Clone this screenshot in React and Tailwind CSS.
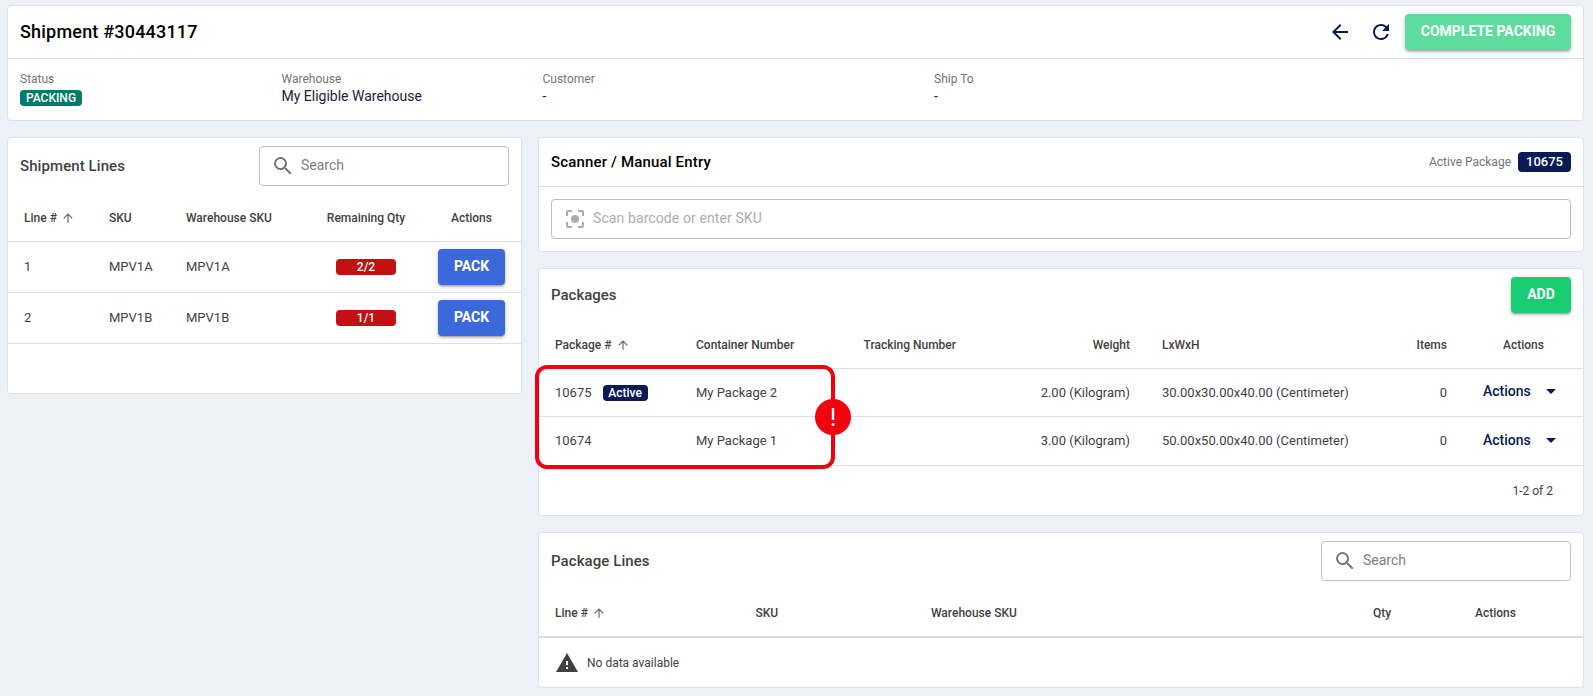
import React from "react";
import {
  MdArrowBack,
  MdArrowDropDown,
  MdArrowUpward,
  MdRefresh,
  MdSearch,
  MdWarning,
} from "react-icons/md";

const shipmentLines = [
  { line: 1, sku: "MPV1A", warehouseSku: "MPV1A", remaining: "2/2" },
  { line: 2, sku: "MPV1B", warehouseSku: "MPV1B", remaining: "1/1" },
];

const packages = [
  {
    id: 10675,
    active: true,
    container: "My Package 2",
    weight: "2.00 (Kilogram)",
    size: "30.00x30.00x40.00 (Centimeter)",
    items: 0,
  },
  {
    id: 10674,
    active: false,
    container: "My Package 1",
    weight: "3.00 (Kilogram)",
    size: "50.00x50.00x40.00 (Centimeter)",
    items: 0,
  },
];

const buttonShadow =
  "shadow-[0_1px_5px_rgba(0,0,0,0.2),0_2px_2px_rgba(0,0,0,0.14),0_3px_1px_-2px_rgba(0,0,0,0.12)]";

const Card = ({ className = "", children }) => (
  <div className={`rounded border border-[#d9e2ef] bg-white ${className}`}>
    {children}
  </div>
);

const Button = ({ className = "", children }) => (
  <button
    className={`h-9 rounded pb-0.5 text-sm font-bold whitespace-nowrap text-white ${buttonShadow} ${className}`}
  >
    {children}
  </button>
);

const SearchBox = () => (
  <div className="flex h-10 w-[250px] items-center rounded border border-[#c2c2c2] px-[11px]">
    <MdSearch className="h-6 w-6 text-[#757575]" />
    <input
      className="ml-1.5 w-40 pb-0.5 text-sm outline-none placeholder:text-[#808080]"
      placeholder="Search"
    />
  </div>
);

const SortHeader = ({ label }) => (
  <span className="flex items-center">
    {label}
    <MdArrowUpward className="ml-1 h-[14px] w-[14px] text-[#666]" />
  </span>
);

const Field = ({ label, children }) => (
  <div>
    <p className="text-xs leading-[18px] text-[#757575]">{label}</p>
    <div className="text-sm leading-4 text-[#1d2238]">{children}</div>
  </div>
);

const ShipmentHeader = () => (
  <Card className="h-[116px]">
    <div className="flex h-[53px] items-center border-b border-[#dedede] px-3">
      <h1 className="flex-1 text-lg font-medium tracking-[0.2px] text-black">
        Shipment #30443117
      </h1>
      <MdArrowBack className="h-6 w-6 text-[#081b54]" />
      <MdRefresh className="mr-3 ml-[17px] h-6 w-6 text-[#081b54]" />
      <Button className="w-[166px] bg-[#5edc9f]">COMPLETE PACKING</Button>
    </div>
    <div className="grid grid-cols-[261.5px_261px_391.5px_1fr] px-3 pt-[11px]">
      <Field label="Status">
        <span className="mt-0.5 block h-4 w-[62px] rounded bg-[#047a69] text-center text-xs leading-4 font-medium text-white">
          PACKING
        </span>
      </Field>
      <Field label="Warehouse">My Eligible Warehouse</Field>
      <Field label="Customer">-</Field>
      <Field label="Ship To">-</Field>
    </div>
  </Card>
);

const lineCols =
  "grid grid-cols-[85px_77px_125px_110px_1fr] items-center border-b border-[#dedede] pl-4";

const ShipmentLines = () => (
  <Card className="h-[257px] w-[515px]">
    <div className="flex h-[55px] items-center justify-between px-3">
      <h2 className="pt-px text-[15px] font-medium tracking-[0.08px]">
        Shipment Lines
      </h2>
      <SearchBox />
    </div>
    <div className={`${lineCols} h-[49px] pt-0.5 text-xs font-medium`}>
      <SortHeader label="Line #" />
      <span>SKU</span>
      <span>Warehouse SKU</span>
      <span className="text-center">Remaining Qty</span>
      <span className="pl-px text-center">Actions</span>
    </div>
    {shipmentLines.map((row) => (
      <div key={row.line} className={`${lineCols} h-[51px] text-[13px]`}>
        <span>{row.line}</span>
        <span>{row.sku}</span>
        <span>{row.warehouseSku}</span>
        <span className="mx-auto h-4 w-[60px] rounded bg-[#c31013] text-center text-xs leading-4 font-medium text-white">
          {row.remaining}
        </span>
        <div className="flex justify-center pl-px">
          <Button className="w-[67px] bg-[#3b69db]">PACK</Button>
        </div>
      </div>
    ))}
  </Card>
);

const Scanner = () => (
  <Card className="h-[115px]">
    <div className="flex h-[49px] items-center border-b border-[#dedede] px-3">
      <h2 className="flex-1 text-[15px] font-medium tracking-[0.16px] text-black">
        Scanner / Manual Entry
      </h2>
      <span className="mr-[7px] text-xs text-[#757575]">Active Package</span>
      <span className="flex h-5 w-[53px] items-center justify-center rounded bg-[#081b54] text-[13px] font-medium text-white">
        10675
      </span>
    </div>
    <div className="px-3 pt-3">
      <div className="flex h-10 items-center rounded border border-[#bdbdbd] px-[11px]">
        <svg className="h-6 w-6" viewBox="0 0 24 24" fill="#acacac">
          <path d="M12 8a4 4 0 1 0 0 8a4 4 0 0 0 0-8zM5 15H3v4a2 2 0 0 0 2 2h4v-2H5zM5 5h4V3H5a2 2 0 0 0-2 2v4h2zM19 3h-4v2h4v4h2V5a2 2 0 0 0-2-2zM19 19h-4v2h4a2 2 0 0 0 2-2v-4h-2z" />
        </svg>
        <input
          className="ml-1.5 w-80 pb-0.5 text-sm tracking-[0.1px] outline-none placeholder:text-[#adadad]"
          placeholder="Scan barcode or enter SKU"
        />
      </div>
    </div>
  </Card>
);

const packageCols =
  "grid grid-cols-[141px_167.5px_172.5px_94px_32px_180px_105px_1fr] items-center border-b border-[#dedede] pl-4";

const Packages = () => (
  <Card className="h-[248px]">
    <div className="flex h-[52px] items-center justify-between px-3">
      <h2 className="text-[15px] font-medium">Packages</h2>
      <Button className="w-[60px] bg-[#18cd73]">ADD</Button>
    </div>
    <div className={`${packageCols} h-[48px] text-xs font-medium`}>
      <SortHeader label="Package #" />
      <span>Container Number</span>
      <span>Tracking Number</span>
      <span className="text-right">Weight</span>
      <span />
      <span>LxWxH</span>
      <span className="text-right">Items</span>
      <span className="pl-[56px]">Actions</span>
    </div>
    <div className="relative">
      {packages.map((row) => (
        <div
          key={row.id}
          className={`${packageCols} text-[13px] ${
            row.active ? "h-[48px]" : "h-[49px]"
          }`}
        >
          <span className="flex items-center">
            {row.id}
            {row.active && (
              <span className="ml-[11px] h-4 w-[45px] rounded bg-[#081b54] text-center text-xs leading-4 font-medium text-white">
                Active
              </span>
            )}
          </span>
          <span>{row.container}</span>
          <span />
          <span className="text-right whitespace-nowrap">{row.weight}</span>
          <span />
          <span className="whitespace-nowrap">{row.size}</span>
          <span className="text-right">{row.items}</span>
          <span className="flex items-center pb-[3px] pl-9 text-sm font-medium text-[#081b54]">
            Actions
            <MdArrowDropDown className="ml-2 h-6 w-6" />
          </span>
        </div>
      ))}

      {/* error outline over the first two columns */}
      <div className="absolute -top-1 -left-1 h-[104px] w-[300px] rounded-xl border-4 border-[#f2000d]" />
      <div className="absolute top-[30px] left-[276px] flex h-9 w-9 items-center justify-center rounded-full bg-[#f2000d]">
        <svg className="h-5 w-1" viewBox="0 0 4 20" fill="white">
          <rect x="0.8" y="1" width="2.4" height="12" />
          <circle cx="2" cy="17.6" r="1.5" />
        </svg>
      </div>
    </div>
    <p className="pt-[17px] pr-[30px] text-right text-xs">1-2 of 2</p>
  </Card>
);

const PackageLines = () => (
  <Card className="h-[156px]">
    <div className="flex h-[55px] items-center justify-between px-3">
      <h2 className="pt-px text-[15px] font-medium tracking-[0.08px]">
        Package Lines
      </h2>
      <SearchBox />
    </div>
    <div className="grid h-[50px] grid-cols-[200.5px_175.5px_442px_102px_1fr] items-center border-b-2 border-[#dedede] pt-0.5 pl-4 text-xs font-medium">
      <SortHeader label="Line #" />
      <span>SKU</span>
      <span>Warehouse SKU</span>
      <span>Qty</span>
      <span>Actions</span>
    </div>
    <div className="flex h-[50px] items-center pl-4 text-xs">
      <MdWarning className="mr-2 h-6 w-6" />
      No data available
    </div>
  </Card>
);

const App = () => {
  return (
    <div className="h-[696px] overflow-hidden bg-[#edf0f6] pt-[5px] pr-[9px] pl-[7px] font-[Roboto,sans-serif] text-[#424242]">
      <ShipmentHeader />
      <div className="mt-4 flex items-start justify-between">
        <ShipmentLines />
        <div className="flex w-[1046px] flex-col gap-4">
          <Scanner />
          <Packages />
          <PackageLines />
        </div>
      </div>
    </div>
  );
};

export default App;
